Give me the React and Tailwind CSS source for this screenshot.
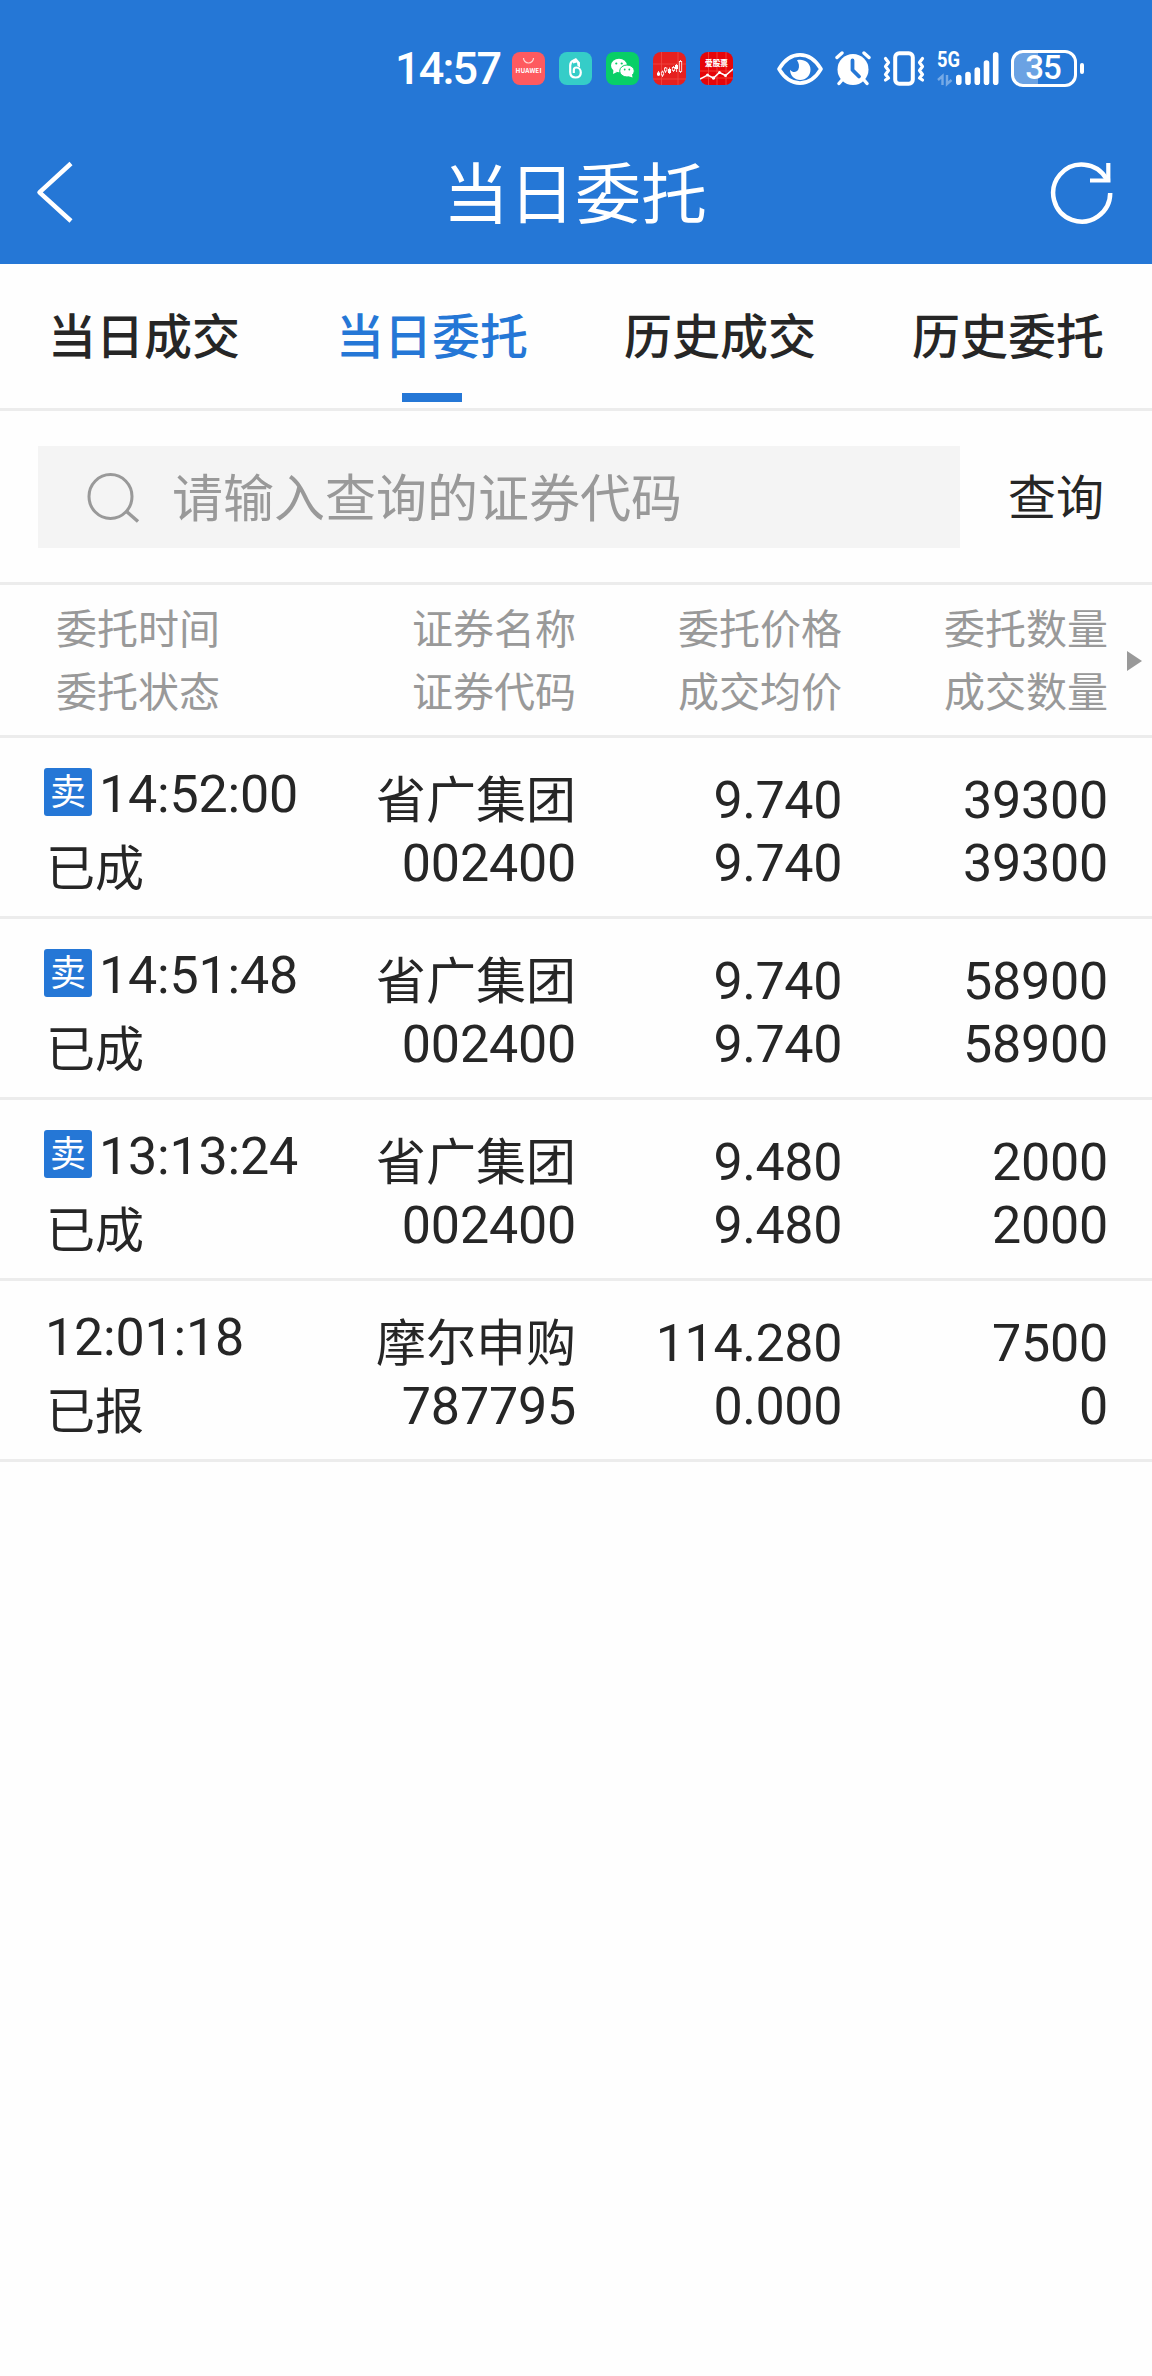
const tabs = ["当日成交", "当日委托", "历史成交", "历史委托"];

const columns = [
    ["委托时间", "委托状态"],
    ["证券名称", "证券代码"],
    ["委托价格", "成交均价"],
    ["委托数量", "成交数量"],
];

const orders = [
    { side: "卖", time: "14:52:00", status: "已成", name: "省广集团", code: "002400", price: "9.740", avg: "9.740", qty: "39300", filled: "39300" },
    { side: "卖", time: "14:51:48", status: "已成", name: "省广集团", code: "002400", price: "9.740", avg: "9.740", qty: "58900", filled: "58900" },
    { side: "卖", time: "13:13:24", status: "已成", name: "省广集团", code: "002400", price: "9.480", avg: "9.480", qty: "2000", filled: "2000" },
    { side: "", time: "12:01:18", status: "已报", name: "摩尔申购", code: "787795", price: "114.280", avg: "0.000", qty: "7500", filled: "0" },
];

const AppIcons = () => (
    <div className="ml-[12px] flex gap-[14px]">
        <svg className="h-[33px] w-[33px]" viewBox="0 0 33 33">
            <rect width="33" height="33" rx="8" fill="#fe5a5f" />
            <path d="M11.5 6a5 5 0 0 0 10 0" fill="none" stroke="#ffd9d6" strokeWidth="1.2" />
            <text x="16.5" y="21.4" textAnchor="middle" textLength="26" fontSize="6.4" fontWeight="700" fill="#fff">HUAWEI</text>
        </svg>
        <svg className="h-[33px] w-[33px]" viewBox="0 0 33 33">
            <rect width="33" height="33" rx="8" fill="#35cdc8" />
            <path d="M14.500 8.500c-2.300 1-3.300 2.500-3.300 5v6.500c0 3.500 2 5.500 5.300 5.500s5.300-2 5.300-5-2-5-4.500-5c-1.500 0-2.500 1-2.500 2.500v3" fill="none" stroke="#fff" strokeWidth="2.200" />
            <path d="M14 7.500l3-1.500 4 4.500v5l-2.500-1.500-.5-3.500-4 1z" fill="#fff" />
        </svg>
        <svg className="h-[33px] w-[33px]" viewBox="0 0 33 33">
            <rect width="33" height="33" rx="8" fill="#08cf67" />
            <ellipse cx="13" cy="13.500" rx="8" ry="6.800" fill="#fff" />
            <path d="M7.500 18l-.5 4 4-2z" fill="#fff" />
            <ellipse cx="21" cy="19" rx="7.300" ry="6" fill="#fff" stroke="#08cf67" strokeWidth="1" />
            <path d="M22 24l4.500 1.500-.5-3z" fill="#fff" />
            <g fill="#08cf67">
                <circle cx="10.300" cy="11.500" r="1.100" />
                <circle cx="15.700" cy="11.500" r="1.100" />
                <circle cx="18.700" cy="17.500" r=".9" />
                <circle cx="23.300" cy="17.500" r=".9" />
            </g>
        </svg>
        <svg className="h-[33px] w-[33px]" viewBox="0 0 33 33">
            <rect width="33" height="33" rx="8" fill="#e6201f" />
            <path d="M0 12h33M0 27h33M8.500 0v33M25 0v33" stroke="#f04a44" strokeWidth=".8" />
            <path d="M5.500 19v5M9.500 18.500v6.500M12.500 15v6M16.500 15.500v6.500M20.500 14v6M23.500 12v8M27.500 8v13" stroke="#fff" strokeWidth=".8" />
            <g fill="#fff">
                <rect x="4" y="20.500" width="3" height="3" />
                <rect x="15" y="17" width="3" height="4" />
                <rect x="22" y="13" width="3" height="4" />
            </g>
            <g fill="#e6201f" stroke="#fff" strokeWidth=".8">
                <rect x="8.300" y="20" width="2.400" height="3" />
                <rect x="11.500" y="16" width="2.400" height="3" />
                <rect x="19.300" y="15.500" width="2.400" height="3" />
                <rect x="26.300" y="9.500" width="2.400" height="10" />
            </g>
        </svg>
        <svg className="h-[33px] w-[33px]" viewBox="0 0 33 33">
            <rect width="33" height="33" rx="8" fill="#e60509" />
            <path d="M0 19h33M0 26h33M8.500 0v33M17 0v33M26 0v33" stroke="#f24a42" strokeWidth=".8" />
            <text x="16.500" y="13.500" textAnchor="middle" fontSize="7.600" fontWeight="900" fill="#fff">爱股票</text>
            <path d="M0 27l7.500-4 6 3 6-5.500 6 3L33 17" fill="none" stroke="#fff" strokeWidth="1.500" />
            <g fill="#fff">
                <circle cx="7.500" cy="23" r="1.500" />
                <circle cx="13.500" cy="26" r="1.700" />
                <circle cx="19.500" cy="20.500" r="1.500" />
                <circle cx="25.500" cy="23.500" r="1.500" />
            </g>
        </svg>
    </div>
);

const EyeIcon = () => (
    <svg className="ml-[44px] h-[34px] w-[46px]" viewBox="0 0 46 34" fill="none">
        <path d="M2 17C8 7 14.500 2.900 23 2.900S38 7 44 17C38 27 31.500 31.100 23 31.100S8 27 2 17z" stroke="#fff" strokeWidth="3.600" strokeLinejoin="round" />
        <path d="M20 8.200c6-1.800 13.500 2 13.500 9.300 0 6-4.500 10.500-10.300 10.500-5.500 0-10-4.300-10.200-10.300 2.800 3.500 7 2.600 8.300-.2 1.400-3.200.7-6.300-1.300-9.300z" fill="#fff" />
    </svg>
);

const AlarmIcon = () => (
    <svg className="ml-[12px] h-[35px] w-[36px]" viewBox="0 0 36 35" fill="none" stroke="#fff" strokeLinecap="round">
        <circle cx="18" cy="18.500" r="15.500" fill="#fff" stroke="none" />
        <path d="M2 6.500L7 2M34 6.500L29 2M7 29l-3 3.500M29 29l3 3.500" strokeWidth="3.400" />
        <path d="M17.500 9.500v9.500l6.500 6.500" stroke="#2577d6" strokeWidth="3.800" strokeLinejoin="round" />
    </svg>
);

const VibrateIcon = () => (
    <svg className="ml-[12px] h-[35px] w-[42px]" viewBox="0 0 42 35" fill="none" stroke="#fff" strokeLinejoin="round" strokeLinecap="round">
        <rect x="12.200" y="2.200" width="17.600" height="30.600" rx="4" strokeWidth="4" />
        <path d="M2.500 7.500l3 4-3 4 3 4-3 4 3 3.500-3 2M39.500 7.500l-3 4 3 4-3 4 3 4-3 3.500 3 2" strokeWidth="3.200" />
    </svg>
);

const SignalIcon = () => (
    <svg className="ml-[12px] h-[35px] w-[62px] overflow-visible" viewBox="0 0 62 35">
        <text x="0" y="16" textLength="23" lengthAdjust="spacingAndGlyphs" fontSize="22" fontWeight="700" fill="#fff" className="font-[Roboto,sans-serif]">5G</text>
        <g stroke="#76aae6" strokeWidth="2.400" fill="none">
            <path d="M5.500 34V25l-4.500 4M10 24v9l4.500-4" />
        </g>
        <g stroke="#fff" strokeWidth="5.600" strokeLinecap="round">
            <path d="M21.800 26.500v4.700M31 23.500v7.700M40.300 19v12.200M49.500 12v19.200M58.700 3.800v27.400" />
        </g>
    </svg>
);

const BatteryIcon = () => (
    <div className="ml-[12px] flex items-center">
        <div className="flex h-[37px] w-[66px] items-center justify-center rounded-[12px] border-[3px] border-white bg-linear-to-r from-[#6ba2e3] from-40% to-transparent to-40% font-[Roboto,sans-serif] text-[33px] leading-none font-medium tracking-[-1px]">
            <span className="-mt-[2px] -ml-[2px]">35</span>
        </div>
        <div className="ml-[3px] h-[11px] w-[4px] rounded-full bg-white" />
    </div>
);

const StatusBar = () => (
    <div className="flex h-[137px] items-center pl-[395px] text-white">
        <span className="w-[105px] font-[Roboto,sans-serif] text-[45px] leading-none font-medium tracking-[-1.8px] whitespace-nowrap">14:57</span>
        <AppIcons />
        <EyeIcon />
        <AlarmIcon />
        <VibrateIcon />
        <SignalIcon />
        <BatteryIcon />
    </div>
);

const TitleBar = () => (
    <div className="flex h-[110px] items-center justify-between pr-[38px] pl-[36px] text-white">
        <svg className="h-[62px] w-[65px]" viewBox="0 0 65 62" fill="none" stroke="#fff" strokeWidth="4.500">
            <path d="M35 2.500L3.500 31.300 35 60" strokeLinejoin="round" />
        </svg>
        <h1 className="-mt-[7px] text-[66px] leading-none">当日委托</h1>
        <svg className="h-[64px] w-[65px]" viewBox="0 0 65 64" fill="none" stroke="#fff" strokeWidth="4.500">
            <path d="M61.200 33A28.500 28.500 0 1 1 57.500 19" />
            <path d="M59.300 3v18M41 20.500h20.500" strokeWidth="4.200" />
        </svg>
    </div>
);

const OrderRow = ({ order }) => (
    <div className="grid h-[181px] grid-cols-[310px_266px_266px_266px] border-b-[3px] border-[#ececec] text-right text-[#262626]">
        <div className="pt-[15px] pl-[44px] text-left">
            <div className="flex h-[74px] items-center">
                {order.side && (
                    <span className="mt-[3px] mr-[7px] flex h-[48px] w-[48px] justify-center rounded-[3px] bg-[#2577d6] text-[36px] leading-[43px] text-white">
                        {order.side}
                    </span>
                )}
                <span className={`pt-[9px] font-[Roboto,sans-serif] text-[52px] leading-[60px] tracking-[-0.2px] ${order.side ? "" : "pl-[1px]"}`}>{order.time}</span>
            </div>
            <div className="pt-[1px] pl-[2px] text-[49px] leading-[74px]">{order.status}</div>
        </div>
        <div className="pt-[27px]">
            <div className="text-[50px] leading-[63px]">{order.name}</div>
            <div className="pt-[4px] font-[Roboto,sans-serif] text-[52px] leading-[63px] tracking-[-0.2px]">{order.code}</div>
        </div>
        <div className="pt-[31px] font-[Roboto,sans-serif] text-[52px] leading-[63px] tracking-[-0.4px]">
            <div>{order.price}</div>
            <div>{order.avg}</div>
        </div>
        <div className="pt-[31px] font-[Roboto,sans-serif] text-[52px] leading-[63px] tracking-[-0.2px]">
            <div>{order.qty}</div>
            <div>{order.filled}</div>
        </div>
    </div>
);

const App = () => {
    const activeTab = "当日委托";

    return (
        <div className="min-h-[2376px] w-[1152px] bg-[#fefefe] font-['Noto_Sans_CJK_SC',sans-serif]">
            <header className="h-[264px] bg-[#2577d6]">
                <StatusBar />
                <TitleBar />
            </header>

            <nav className="grid h-[147px] grid-cols-4 border-b-[3px] border-[#ececec]">
                {tabs.map((tab) => (
                    <div
                        key={tab}
                        className={`flex flex-col items-center justify-between pt-[33px] pb-[6px] text-[48px] leading-[72px] font-medium ${tab === activeTab ? "text-[#2577d6]" : "text-[#262626]"}`}
                    >
                        <span>{tab}</span>
                        {tab === activeTab && <span className="h-[9px] w-[60px] bg-[#2577d6]" />}
                    </div>
                ))}
            </nav>

            <div className="flex h-[174px] items-center border-b-[3px] border-[#ececec] pl-[38px]">
                <div className="flex h-[102px] w-[922px] items-center bg-[#f4f4f4] pl-[49px] text-[#999999]">
                    <svg className="h-[52px] w-[54px]" viewBox="0 0 54 52" fill="none" stroke="#999999" strokeWidth="3">
                        <ellipse cx="23.500" cy="25.500" rx="21.500" ry="22" />
                        <path d="M39 40l12 10.500" strokeWidth="3.500" />
                    </svg>
                    <span className="-mt-[2px] ml-[31px] text-[51px] leading-none">请输入查询的证券代码</span>
                </div>
                <span className="-mt-[5px] ml-[48px] text-[48px] leading-none text-[#262626]">查询</span>
            </div>

            <div className="flex h-[153px] items-center border-b-[3px] border-[#ececec] text-[#999999]">
                <div className="grid grid-cols-[310px_266px_266px_266px] text-right text-[41px] leading-[63px]">
                    {columns.map(([top, bottom], i) => (
                        <div key={top} className={i === 0 ? "-mt-[5px] pl-[56px] text-left" : "-mt-[5px]"}>
                            <div>{top}</div>
                            <div>{bottom}</div>
                        </div>
                    ))}
                </div>
                <svg className="mt-[1px] ml-[19px] h-[20px] w-[15px]" viewBox="0 0 15 20">
                    <path d="M0 0l15 10L0 20z" fill="#999999" />
                </svg>
            </div>

            {orders.map((order) => (
                <OrderRow key={order.time} order={order} />
            ))}
        </div>
    );
};

export default App;
